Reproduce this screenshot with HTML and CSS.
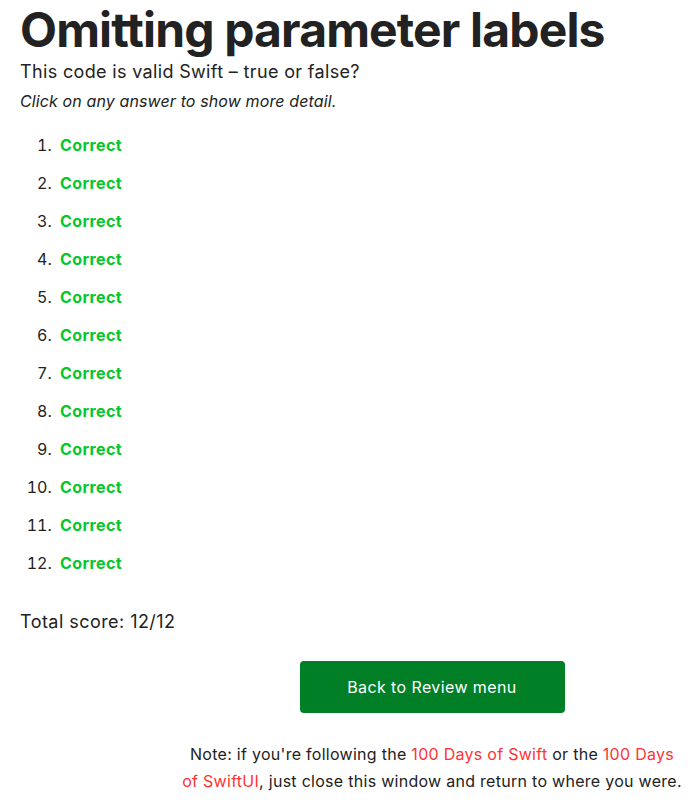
FILE: index.html
```html
<!DOCTYPE html>
<html>
<head>
<meta charset="utf-8">
<link rel="stylesheet" href="styles.css">
</head>
<body>
<div class="page">
  <h1 class="title">Omitting parameter labels</h1>
  <p class="lead">This code is valid Swift – true or false?</p>
  <p class="hint">Click on any answer to show more detail.</p>
  <ol class="answers">
    <li><span class="correct">Correct</span></li>
    <li><span class="correct">Correct</span></li>
    <li><span class="correct">Correct</span></li>
    <li><span class="correct">Correct</span></li>
    <li><span class="correct">Correct</span></li>
    <li><span class="correct">Correct</span></li>
    <li><span class="correct">Correct</span></li>
    <li><span class="correct">Correct</span></li>
    <li><span class="correct">Correct</span></li>
    <li><span class="correct">Correct</span></li>
    <li><span class="correct">Correct</span></li>
    <li><span class="correct">Correct</span></li>
  </ol>
  <p class="score">Total score: 12/12</p>
  <div class="actions">
    <a class="button" href="#">Back to Review menu</a>
    <p class="note">Note: if you're following the <a href="#">100 Days of Swift</a> or the <a href="#">100 Days of SwiftUI</a>, just close this window and return to where you were.</p>
  </div>
</div>
</body>
</html>
```

FILE: styles.css
```css
html, body {
  margin: 0;
  padding: 0;
  background: #fff;
}
body {
  font-family: Inter, "Liberation Sans", sans-serif;
  color: #222;
  font-size: 16px;
}
.page {
  padding: 0 20px;
}
.title {
  font-size: 48px;
  font-weight: 700;
  margin: 0;
  padding-top: 1px;
  line-height: 58px;
  letter-spacing: -0.85px;
}
.lead {
  font-size: 18px;
  margin: 0;
  line-height: 26px;
  letter-spacing: 0.34px;
}
.hint {
  font-size: 16px;
  font-style: italic;
  margin: 4px 0 0;
  line-height: 24px;
  letter-spacing: 0.12px;
}
.answers {
  margin: 20px 0 0;
  padding-left: 36px;
}
.answers li {
  line-height: 24px;
  margin-bottom: 14px;
  padding-left: 4px;
}
.correct {
  color: #00c82e;
  font-weight: 700;
  letter-spacing: 0.4px;
}
.score {
  font-size: 18px;
  margin: 34px 0 0;
  line-height: 26px;
  letter-spacing: 0.45px;
}
.actions {
  display: flex;
  flex-direction: column;
  align-items: center;
  width: 502px;
  margin-left: 161px;
  padding-top: 26px;
}
.button {
  display: flex;
  align-items: center;
  justify-content: center;
  width: 265px;
  height: 52px;
  background: #007f27;
  color: #fff;
  border-radius: 4px;
  text-decoration: none;
  font-size: 16px;
  letter-spacing: 0.4px;
}
.note {
  text-align: center;
  margin: 28px 0 0;
  line-height: 27px;
  letter-spacing: 0.28px;
}
.note a {
  color: #f33;
  text-decoration: none;
}
```
